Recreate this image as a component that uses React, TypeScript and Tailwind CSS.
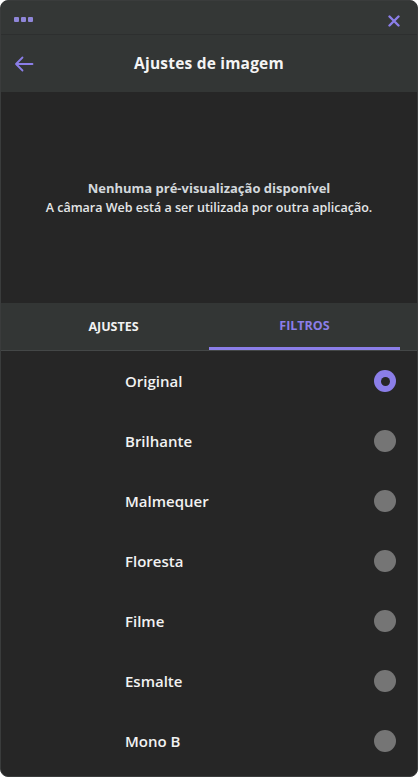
import React, { useState } from "react";

const filters = ["Original", "Brilhante", "Malmequer", "Floresta", "Filme", "Esmalte", "Mono B"];

export default function App() {
  const [selected, setSelected] = useState("Original");
  const [tab, setTab] = useState("filtros");

  return (
    <div
      className="w-[418px] h-[777px] bg-[#262626] rounded-[8px] overflow-hidden border border-[#3a3c3c] flex flex-col text-white"
      style={{ fontFamily: "'Open Sans', 'Noto Sans', sans-serif" }}
    >
      {/* Title bar */}
      <div className="h-[34px] bg-[#343736] border-b border-[#2d2f2f] flex items-center justify-between pl-[13px] pr-[17px] shrink-0">
        <div className="flex gap-[2px] mt-[4px]">
          <span className="w-[5px] h-[5px] rounded-[1px] bg-[#8f86d9]" />
          <span className="w-[5px] h-[5px] rounded-[1px] bg-[#8f86d9]" />
          <span className="w-[5px] h-[5px] rounded-[1px] bg-[#8f86d9]" />
        </div>
        <svg width="12" height="12" viewBox="0 0 12 12" className="mt-[6px]">
          <path d="M1.5 1.5 L10.5 10.5 M10.5 1.5 L1.5 10.5" stroke="#8b7ee8" strokeWidth="2.4" strokeLinecap="round" />
        </svg>
      </div>

      {/* Header */}
      <div className="h-[57px] bg-[#333635] relative flex items-center justify-center shrink-0">
        <button className="absolute left-[13px] top-1/2 -translate-y-1/2">
          <svg width="20" height="16" viewBox="0 0 20 16">
            <path d="M18.5 8 H2 M8.5 1.5 L2 8 L8.5 14.5" fill="none" stroke="#8b7ee8" strokeWidth="1.8" strokeLinecap="round" strokeLinejoin="round" />
          </svg>
        </button>
        <h1 className="text-[15.5px] font-bold text-[#f4f4f4] tracking-[0.2px]">Ajustes de imagem</h1>
      </div>

      {/* Preview */}
      <div className="h-[211px] flex flex-col items-center justify-center leading-[19px] shrink-0 pt-[1px]">
        <p className="text-[13px] font-bold text-[#d3d8dc]">Nenhuma pré-visualização disponível</p>
        <p className="text-[12.5px] text-[#e4e6e8] font-semibold">A câmara Web está a ser utilizada por outra aplicação.</p>
      </div>

      {/* Tabs */}
      <div className="h-[48px] bg-[#333635] border-b border-[#444747] grid grid-cols-2 px-[17px] shrink-0">
        <button
          onClick={() => setTab("ajustes")}
          className={`flex items-center justify-center text-[12.5px] font-bold pt-[1px] ${
            tab === "ajustes" ? "text-[#8b7ee8] border-b-[3px] border-[#8b7ee8]" : "text-[#f2f2f2]"
          }`}
        >
          AJUSTES
        </button>
        <button
          onClick={() => setTab("filtros")}
          className={`flex items-center justify-center text-[12.5px] font-bold pt-[3px] ${
            tab === "filtros" ? "text-[#8b7ee8] border-b-[3px] border-[#8b7ee8]" : "text-[#f2f2f2]"
          }`}
        >
          FILTROS
        </button>
      </div>

      {/* Filter list */}
      <div className="flex flex-col">
        {filters.map((name) => (
          <button
            key={name}
            onClick={() => setSelected(name)}
            className="h-[60px] flex items-center justify-between pl-[124px] pr-[21px]"
          >
            <span className="text-[15px] font-semibold text-[#f2f2f2]">{name}</span>
            {selected === name ? (
              <span className="w-[22px] h-[22px] rounded-full bg-[#8b7ee8] flex items-center justify-center">
                <span className="w-[9px] h-[9px] rounded-full bg-[#262626]" />
              </span>
            ) : (
              <span className="w-[22px] h-[22px] rounded-full bg-[#757575]" />
            )}
          </button>
        ))}
      </div>
    </div>
  );
}
